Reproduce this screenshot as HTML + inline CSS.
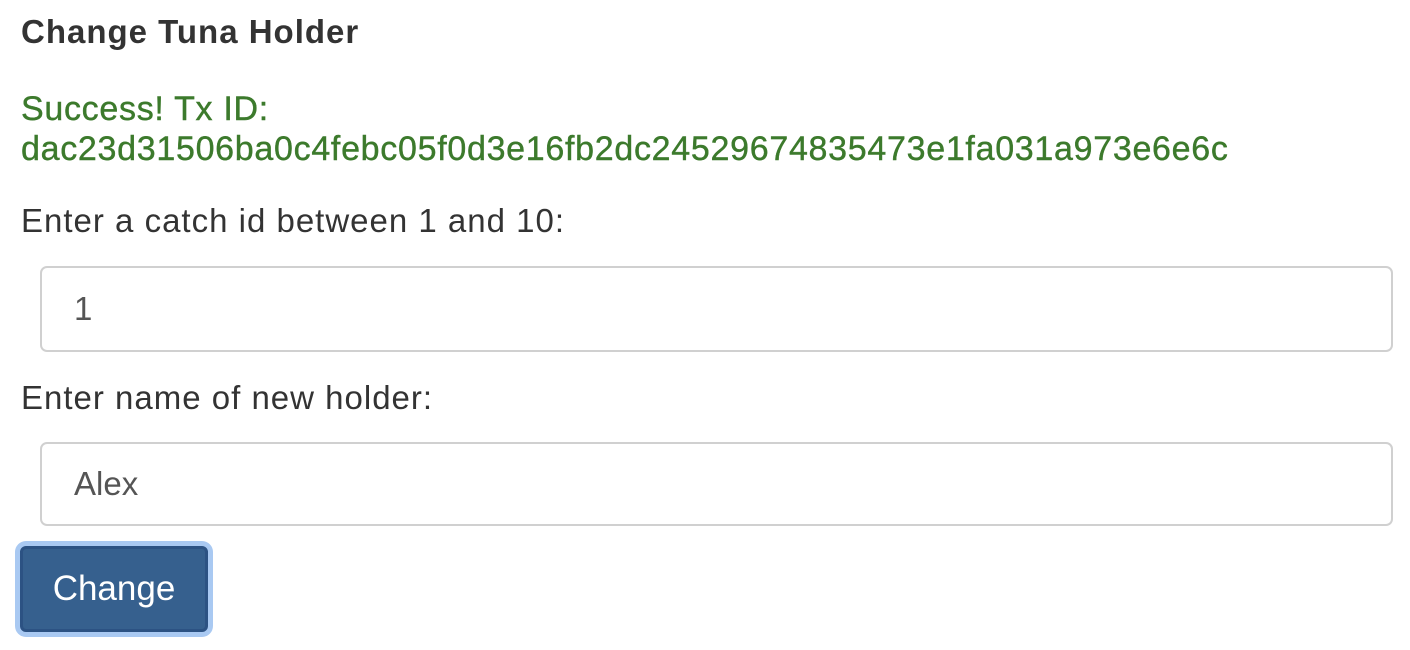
<!DOCTYPE html>
<html><head><style>
body{margin:0;width:1410px;height:650px;background:#fff;font-family:"Liberation Sans",Arial,sans-serif;color:#333;position:relative;overflow:hidden}
.a{position:absolute;white-space:nowrap;line-height:1}
.t{left:21px;top:15px;font-size:33px;font-weight:bold;letter-spacing:1px}
.g{left:21px;color:#3c7a2c;font-size:34px;letter-spacing:0.7px;-webkit-text-stroke:0.4px #3c7a2c}
.l{left:21px;font-size:33px;letter-spacing:1px}
.in{position:absolute;left:40px;width:1353px;border:2px solid #d0d0d0;border-radius:7px;box-sizing:border-box;font-size:33px;color:#555}
.in span{position:absolute;left:32px;top:50%;transform:translateY(-50%)}
.btn{position:absolute;left:20px;top:546px;width:188px;height:86px;box-sizing:border-box;background:#36608e;border:3px solid #2c5283;border-radius:6px;box-shadow:0 0 0 5px #a9c9f2;color:#fff;font-size:35px;text-align:center;line-height:80px}
</style></head><body>
<div class="a t">Change Tuna Holder</div>
<div class="a g" style="top:92px">Success! Tx ID:</div>
<div class="a g" style="top:132px">dac23d31506ba0c4febc05f0d3e16fb2dc24529674835473e1fa031a973e6e6c</div>
<div class="a l" style="top:204px">Enter a catch id between 1 and 10:</div>
<div class="in" style="top:266px;height:86px"><span>1</span></div>
<div class="a l" style="top:381px">Enter name of new holder:</div>
<div class="in" style="top:442px;height:84px"><span>Alex</span></div>
<div class="btn">Change</div>
</body></html>
